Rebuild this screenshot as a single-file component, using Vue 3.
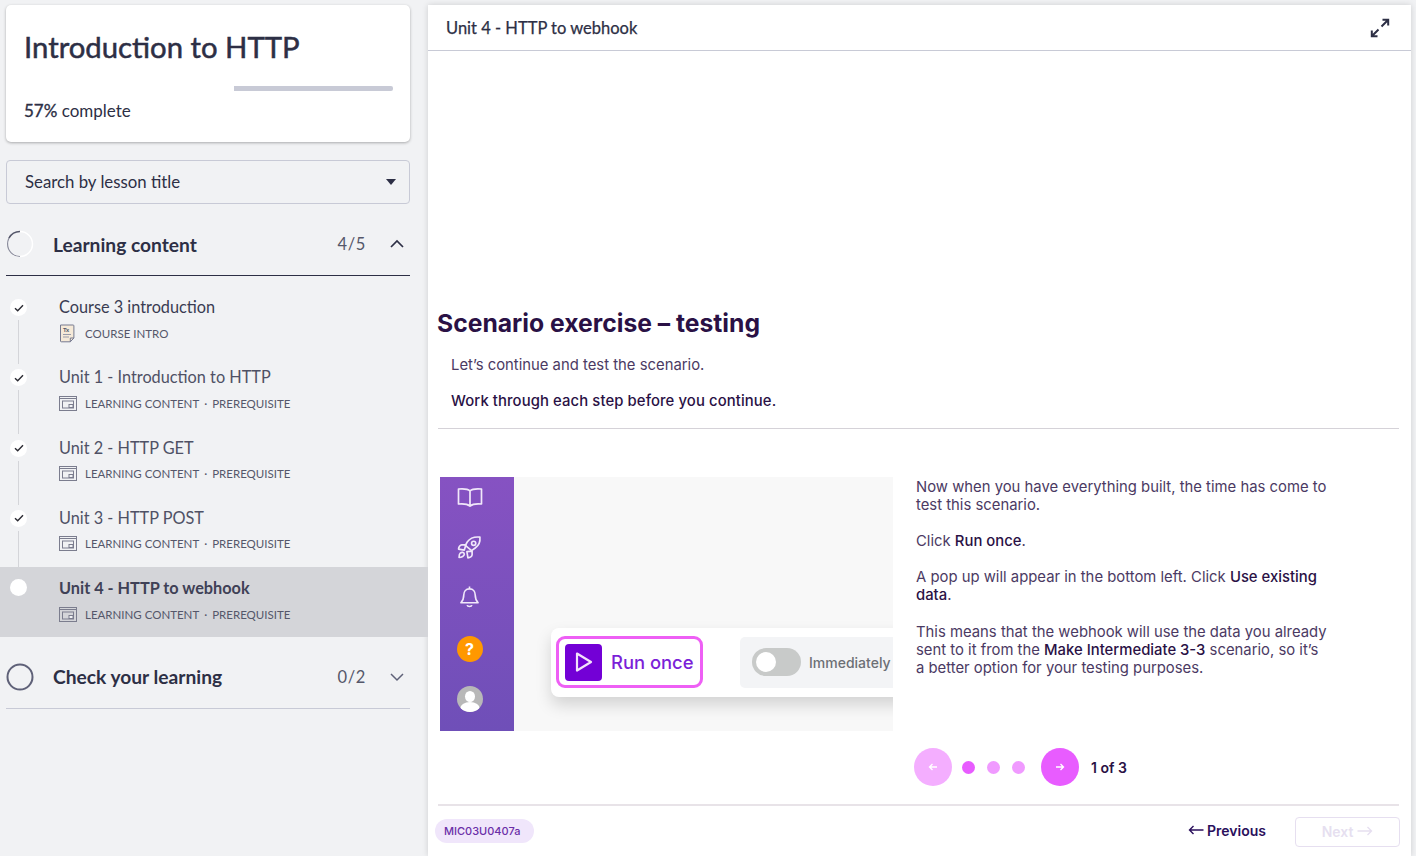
<template>
  <div class="page">
    <aside class="barra">
      <section class="cartao-curso">
        <h1 class="titulo-curso">Introduction to HTTP</h1>
        <div class="progresso"><div class="progresso-feito" :style="{ width: progresso + '%' }"></div></div>
        <p class="progresso-texto"><b>57%</b> complete</p>
      </section>

      <div class="busca">
        <span>Search by lesson title</span>
        <i class="seta-baixo"></i>
      </div>

      <div class="secao secao-aberta">
        <svg class="anel" width="28" height="28" viewBox="0 0 28 28">
          <circle cx="14" cy="14" r="12.5" fill="none" stroke="#fff" stroke-width="1.5" />
          <path d="M5.2 5.2A12.5 12.5 0 0 0 5.2 22.8A12.5 12.5 0 0 0 14 26.5" fill="none" stroke="#8a8c9c" stroke-width="1.2" />
          <path d="M14 1.5A12.5 12.5 0 0 0 3 8" fill="none" stroke="#55576a" stroke-width="1.5" />
        </svg>
        <span class="secao-titulo">Learning content</span>
        <span class="secao-conta">4/5</span>
        <svg class="chevron" width="16" height="10" viewBox="0 0 16 10"><path d="M2 8l6-6 6 6" fill="none" stroke="#2d2f45" stroke-width="1.7" /></svg>
      </div>

      <ul class="licoes">
        <li v-for="(licao, i) in licoes" :key="licao.titulo" class="licao" :class="{ ativa: licao.ativa }">
          <span class="ponto">
            <svg v-if="!licao.ativa" width="10" height="8" viewBox="0 0 10 8"><path d="M1 4.2l2.7 2.6L9 1.2" fill="none" stroke="#2b2b33" stroke-width="1.4" /></svg>
          </span>
          <span v-if="i < licoes.length - 1" class="ligacao"></span>
          <div class="licao-titulo">{{ licao.titulo }}</div>
          <div class="licao-meta">
            <svg v-if="licao.intro" class="icone-intro" width="16" height="19" viewBox="0 0 16 19">
              <path d="M1.5 1h12.6a.8.8 0 0 1 .8.8V14l-3.6 3.8H2.3a.8.8 0 0 1-.8-.8z" fill="#f6ead8" stroke="#767a90" stroke-width="1" />
              <path d="M11.3 17.8V14h3.6" fill="none" stroke="#767a90" />
              <path d="M4 10.5h8M4 13h6" stroke="#9a9caa" />
              <text x="4" y="8" class="tx">Tx</text>
            </svg>
            <svg v-else class="icone-licao" width="18" height="15" viewBox="0 0 18 15">
              <rect x=".5" y=".5" width="17" height="14" fill="none" stroke="#7b7d8e" />
              <path d="M1 2.5h16" stroke="#7b7d8e" />
              <rect x="3.5" y="5" width="11" height="7" fill="none" stroke="#7b7d8e" />
              <rect x="10" y="8.5" width="4" height="3" fill="#f1f2f4" stroke="#7b7d8e" />
            </svg>
            <span>{{ licao.meta }}</span>
            <template v-if="!licao.intro">
              <span class="meta-ponto">·</span>
              <span>PREREQUISITE</span>
            </template>
          </div>
        </li>
      </ul>

      <div class="secao secao-fechada">
        <svg class="anel" width="28" height="28" viewBox="0 0 28 28"><circle cx="14" cy="14" r="12.5" fill="none" stroke="#5f6178" stroke-width="2" /></svg>
        <span class="secao-titulo">Check your learning</span>
        <span class="secao-conta">0/2</span>
        <svg class="chevron" width="16" height="10" viewBox="0 0 16 10"><path d="M2 2l6 6 6-6" fill="none" stroke="#5f6178" stroke-width="1.5" /></svg>
      </div>
    </aside>

    <main class="painel">
      <header class="painel-topo">
        <span>Unit 4 - HTTP to webhook</span>
        <svg width="20" height="20" viewBox="0 0 20 20">
          <path d="M11.5 8.5L18 2M12.5 1.8h5.7v5.7M8.5 11.5L2 18M7.5 18.2H1.8v-5.7" fill="none" stroke="#2d2f45" stroke-width="2" />
        </svg>
      </header>

      <div class="conteudo">
        <h2 class="exercicio">Scenario exercise – testing</h2>
        <p class="intro">Let’s continue and test the scenario.</p>
        <p class="intro forte">Work through each step before you continue.</p>
        <hr class="divisor" />

        <div class="passo">
          <div class="imagem">
            <div class="lateral">
              <span class="lateral-item">
                <svg width="26" height="20" viewBox="0 0 26 20" fill="none" stroke="#f1e8fa" stroke-width="1.7" stroke-linejoin="round">
                  <path d="M13 4C11 2 7 1.5 1.5 2v15c5-.5 9 0 11.5 2 2.5-2 6.5-2.5 11.5-2V2C19 1.5 15 2 13 4zM13 4v15" />
                </svg>
              </span>
              <span class="lateral-item">
                <svg width="25" height="25" viewBox="0 0 24 24" fill="none" stroke="#f1e8fa" stroke-width="1.6" stroke-linejoin="round">
                  <path d="M22 2c-5-.5-9.5 1-12 4.500L8 10l6 5 3.500-2.500C21 10 22.500 6.500 22 2z" />
                  <circle cx="16" cy="8" r="2" />
                  <path d="M8.500 9.500H4.500C3 9.500 1.500 11.500 1.500 13.500l5.500 1zM14.500 15.500v3.500c0 1.500-2 3-4 3l-1-6zM3 17.500c1.500-1.500 4-1 4 1 0 1.500-2.500 3-5 3 0-1.500 0-3 1-4z" />
                </svg>
              </span>
              <span class="lateral-item">
                <svg width="21" height="24" viewBox="0 0 22 24" fill="none" stroke="#f1e8fa" stroke-width="1.7" stroke-linejoin="round">
                  <path d="M11 1v2.500M11 3.500c-4 0-6 3-6 6.500 0 4-1 6-3 8h18c-2-2-3-4-3-8 0-3.500-2-6.500-6-6.500zM8.500 20.500c.5 2 4.500 2 5 0" />
                </svg>
              </span>
              <span class="lateral-item desce"><span class="ajuda">?</span></span>
              <span class="lateral-item desce"><span class="avatar"><i class="cabeca"></i><i class="ombros"></i></span></span>
            </div>
            <div class="tela">
              <div class="barra-run">
                <div class="run-destaque">
                  <span class="run-icone">
                    <svg width="20" height="20" viewBox="0 0 20 20"><path d="M3 1.500l14 8.500-14 8.500z" fill="none" stroke="#f3e2fb" stroke-width="2.200" stroke-linejoin="round" /></svg>
                  </span>
                  <span class="run-texto">Run once</span>
                </div>
                <span class="separador"></span>
                <div class="agenda">
                  <span class="chave"><i></i></span>
                  <span class="agenda-texto">Immediately</span>
                </div>
              </div>
            </div>
          </div>

          <div class="explicacao">
            <p>Now when you have everything built, the time has come to test this scenario.</p>
            <p>Click <b>Run once</b>.</p>
            <p>A pop up will appear in the bottom left. Click <b>Use existing data</b>.</p>
            <p>This means that the webhook will use the data you already sent to it from the <b>Make Intermediate 3-3</b> scenario, so it’s a better option for your testing purposes.</p>
          </div>

          <div class="paginador">
            <span class="circulo apagado">
              <svg width="10" height="10" viewBox="0 0 10 10"><path d="M9 5H1.500M4.500 2L1.500 5l3 3" fill="none" stroke="#fff" stroke-width="1.300" /></svg>
            </span>
            <span class="bolinhas"><i class="atual"></i><i></i><i></i></span>
            <span class="circulo">
              <svg width="10" height="10" viewBox="0 0 10 10"><path d="M1 5h7.500M5.500 2l3 3-3 3" fill="none" stroke="#fff" stroke-width="1.300" /></svg>
            </span>
            <span class="pagina">1 of 3</span>
          </div>
        </div>

        <hr class="divisor rodape-linha" />
        <footer class="rodape">
          <span class="codigo">MIC03U0407a</span>
          <a class="anterior">
            <svg width="16" height="10" viewBox="0 0 16 10"><path d="M15.500 5H1.500M5.500 1l-4 4 4 4" fill="none" stroke="#2a0f5c" stroke-width="1.400" /></svg>
            Previous
          </a>
          <button class="proximo" disabled>
            Next
            <svg width="16" height="10" viewBox="0 0 16 10"><path d="M.5 5h14M10.500 1l4 4-4 4" fill="none" stroke="#e6dff0" stroke-width="1.400" /></svg>
          </button>
        </footer>
      </div>
    </main>
  </div>
</template>

<script setup>
const progresso = 57

const licoes = [
  { titulo: "Course 3 introduction", meta: "COURSE INTRO", intro: true },
  { titulo: "Unit 1 - Introduction to HTTP", meta: "LEARNING CONTENT" },
  { titulo: "Unit 2 - HTTP GET", meta: "LEARNING CONTENT" },
  { titulo: "Unit 3 - HTTP POST", meta: "LEARNING CONTENT" },
  { titulo: "Unit 4 - HTTP to webhook", meta: "LEARNING CONTENT", ativa: true },
]
</script>

<style>
html,
body {
  margin: 0;
  background: #f1f2f4;
}
</style>

<style scoped>
.page {
  display: flex;
  height: 856px;
  overflow: hidden;
  background: #f1f2f4;
  font-family: Lato, "Liberation Sans", sans-serif;
  color: #2d2f45;
}

.barra {
  width: 428px;
  flex-shrink: 0;
  padding-top: 5px;
  box-sizing: border-box;
}

.cartao-curso {
  margin: 0 18px 0 6px;
  height: 137px;
  box-sizing: border-box;
  padding: 24px 17px 0 18px;
  background: #fff;
  border-radius: 5px;
  box-shadow: 0 1px 3px rgba(0, 0, 0, 0.3);
}
.titulo-curso {
  margin: 0;
  font-size: 29.3px;
  line-height: 36px;
  font-weight: 400;
  -webkit-text-stroke: 0.5px #2d2f45;
}
.progresso {
  margin-top: 21px;
  height: 5px;
  border-radius: 2px;
  background: #c8cad6;
}
.progresso-feito {
  height: 5px;
  background: #fff;
}
.progresso-texto {
  margin: 7px 0 0;
  font-size: 17px;
  line-height: 26px;
}
.progresso-texto b {
  font-weight: 400;
  -webkit-text-stroke: 0.35px #2d2f45;
}

.busca {
  margin: 18px 18px 0 6px;
  height: 44px;
  box-sizing: border-box;
  padding: 0 13px 2px 18px;
  display: flex;
  align-items: center;
  justify-content: space-between;
  border: 1px solid #c8cad6;
  border-radius: 4px;
  font-size: 16.8px;
}
.seta-baixo {
  width: 0;
  height: 0;
  margin-top: 2px;
  border: 5px solid transparent;
  border-top: 6px solid #2d2f45;
  border-bottom: 0;
}

.secao {
  margin: 0 18px 0 6px;
  display: flex;
  align-items: center;
  box-sizing: border-box;
}
.secao-aberta {
  height: 72px;
  padding-top: 9px;
  border-bottom: 1px solid #2d2f45;
}
.secao-fechada {
  height: 72px;
  padding-top: 8px;
  border-bottom: 1px solid #c8cad6;
}
.anel {
  flex-shrink: 0;
}
.secao-titulo {
  margin-left: 19px;
  flex: 1;
  font-size: 19.2px;
  font-weight: 700;
}
.secao-conta {
  font-size: 16.5px;
  color: #55576a;
  letter-spacing: 0.6px;
}
.chevron {
  margin: 0 5px 0 23px;
}

.licoes {
  list-style: none;
  margin: 0;
  padding: 10px 0 0;
}
.licao {
  position: relative;
  height: 70.25px;
  box-sizing: border-box;
  padding: 9px 0 0 59px;
}
.licao.ativa {
  background: #d4d5d9;
}
.ponto {
  position: absolute;
  left: 10px;
  top: 13px;
  width: 17px;
  height: 17px;
  border-radius: 50%;
  background: #fff;
  display: flex;
  align-items: center;
  justify-content: center;
}
.ativa .ponto {
  top: 12px;
}
.ligacao {
  position: absolute;
  left: 18px;
  top: 34px;
  width: 1px;
  height: 44px;
  background: #d4d5d9;
}
.licao-titulo {
  font-size: 16.3px;
  line-height: 24px;
  color: #4f5165;
}
.licao:first-child .licao-titulo {
  color: #3a3c52;
}
.ativa .licao-titulo {
  font-weight: 700;
  color: #3f4156;
}
.licao-meta {
  display: flex;
  align-items: center;
  gap: 8px;
  margin-top: 4px;
  height: 20px;
  font-size: 11.5px;
  color: #55576a;
}
.meta-ponto {
  margin: 0 -3px;
}
.icone-intro {
  margin-right: 2px;
  flex-shrink: 0;
}
.tx {
  font-size: 6px;
  font-weight: 700;
  fill: #55576a;
}

.painel {
  width: 983px;
  margin-top: 5px;
  background: #fff;
  box-shadow: 0 0 6px rgba(0, 0, 0, 0.15);
  display: flex;
  flex-direction: column;
}
.painel-topo {
  height: 46px;
  box-sizing: border-box;
  padding: 0 21px 0 18px;
  display: flex;
  align-items: center;
  justify-content: space-between;
  border-bottom: 1px solid #c8cad6;
  font-size: 16.5px;
  -webkit-text-stroke: 0.25px #2d2f45;
}

.conteudo {
  padding: 255px 12px 0 9px;
  font-family: Inter, "Liberation Sans", sans-serif;
  color: #4b3a63;
}
.exercicio {
  margin: 0 0 16px;
  font-size: 24.7px;
  line-height: 34px;
  font-weight: 700;
  color: #2a1145;
}
.intro {
  margin: 0 0 18px 14px;
  font-size: 14.85px;
  line-height: 18px;
}
.forte {
  font-weight: 500;
  letter-spacing: 0.1px;
  color: #2a1145;
}
.divisor {
  margin: 0 0 0 1px;
  border: 0;
  border-top: 1px solid #d5d2d8;
}

.passo {
  margin: 48px 0 0 3px;
  display: grid;
  grid-template-columns: 453px 1fr;
  column-gap: 23px;
}
.imagem {
  height: 254px;
  display: flex;
  overflow: hidden;
  background: #f8f8f8;
}
.lateral {
  width: 74px;
  flex-shrink: 0;
  box-sizing: border-box;
  padding-right: 15px;
  display: flex;
  flex-direction: column;
  align-items: center;
  gap: 10px;
  background: linear-gradient(#8652c2, #6f4fb8);
}
.lateral-item {
  height: 40px;
  display: flex;
  align-items: center;
  justify-content: center;
}
.desce {
  padding-top: 4px;
  height: 36px;
}
.ajuda {
  width: 26px;
  height: 26px;
  border-radius: 50%;
  background: #ff9800;
  color: #fff;
  font-weight: 700;
  font-size: 16px;
  line-height: 26px;
  text-align: center;
}
.avatar {
  position: relative;
  width: 26px;
  height: 26px;
  border-radius: 50%;
  background: #b8b8b8;
  overflow: hidden;
}
.cabeca {
  position: absolute;
  left: 8px;
  top: 5px;
  width: 10px;
  height: 11px;
  border-radius: 50%;
  background: #fff;
}
.ombros {
  position: absolute;
  left: 3px;
  top: 16px;
  width: 20px;
  height: 14px;
  border-radius: 50%;
  background: #fff;
}
.tela {
  flex: 1;
  min-width: 0;
  padding: 151px 0 0 37px;
}
.barra-run {
  width: 380px;
  height: 69px;
  box-sizing: border-box;
  padding: 8px 5px 9px;
  display: flex;
  align-items: center;
  background: #fff;
  border-radius: 8px;
  box-shadow: 0 8px 16px rgba(0, 0, 0, 0.15);
}
.run-destaque {
  width: 147px;
  height: 52px;
  box-sizing: border-box;
  padding-left: 6px;
  display: flex;
  align-items: center;
  gap: 9px;
  flex-shrink: 0;
  border: 3px solid #ee5ff5;
  border-radius: 9px;
}
.run-icone {
  width: 37px;
  height: 37px;
  border-radius: 4px;
  background: #7300d6;
  display: flex;
  align-items: center;
  justify-content: center;
}
.run-texto {
  font-size: 18.4px;
  font-weight: 500;
  color: #7b1fd8;
}
.separador {
  width: 2px;
  height: 14px;
  margin: 0 20px 0 17px;
  background: #dfe1e6;
}
.agenda {
  width: 190px;
  height: 51px;
  flex-shrink: 0;
  box-sizing: border-box;
  padding-left: 12px;
  display: flex;
  align-items: center;
  gap: 8px;
  background: #f3f4f6;
  border-radius: 5px;
}
.chave {
  width: 49px;
  height: 28px;
  box-sizing: border-box;
  padding: 4px;
  border-radius: 14px;
  background: #c8cac9;
}
.chave i {
  display: block;
  width: 20px;
  height: 20px;
  border-radius: 50%;
  background: #fff;
}
.agenda-texto {
  font-size: 14px;
  font-weight: 500;
  color: #6c6f75;
}

.explicacao {
  width: 412px;
  padding-top: 0.5px;
  font-size: 14.85px;
  line-height: 18px;
}
.explicacao p {
  margin: 0 0 18.4px;
}
.explicacao b {
  font-weight: 500;
  color: #2a1145;
}

.paginador {
  grid-column: 2;
  margin: 17px 0 0 -2px;
  display: flex;
  align-items: center;
  font-size: 14px;
}
.circulo {
  width: 38px;
  height: 38px;
  border-radius: 50%;
  background: #e85cff;
  display: flex;
  align-items: center;
  justify-content: center;
}
.apagado {
  background: #f4aeff;
}
.bolinhas {
  display: flex;
  gap: 12px;
  margin: 0 16px 0 10px;
}
.bolinhas i {
  width: 13px;
  height: 13px;
  border-radius: 50%;
  background: #f09aff;
}
.bolinhas .atual {
  background: #e85cff;
}
.pagina {
  margin-left: 12px;
  font-weight: 600;
  color: #2a1145;
}

.rodape-linha {
  margin-top: 18px;
  border-top: 2px solid #e8e3e8;
}
.rodape {
  margin: 9px -1px 0 -2px;
  display: flex;
  align-items: center;
  font-size: 14px;
}
.codigo {
  height: 24px;
  margin-right: auto;
  padding: 0 14px 0 9px;
  border-radius: 12px;
  background: #f0e6fb;
  font-size: 11px;
  font-weight: 500;
  line-height: 24px;
  color: #6b2fa8;
}
.anterior {
  display: flex;
  align-items: center;
  gap: 3px;
  margin-right: 29px;
  padding-bottom: 2px;
  font-weight: 600;
  color: #2a0f5c;
}
.proximo {
  width: 105px;
  height: 30px;
  margin-top: 2px;
  display: flex;
  align-items: center;
  justify-content: center;
  gap: 4px;
  padding: 0 0 2px;
  background: #fff;
  border: 1px solid #e6dff0;
  border-radius: 4px;
  font: 600 14px Inter, "Liberation Sans", sans-serif;
  color: #e6dff0;
}
</style>
